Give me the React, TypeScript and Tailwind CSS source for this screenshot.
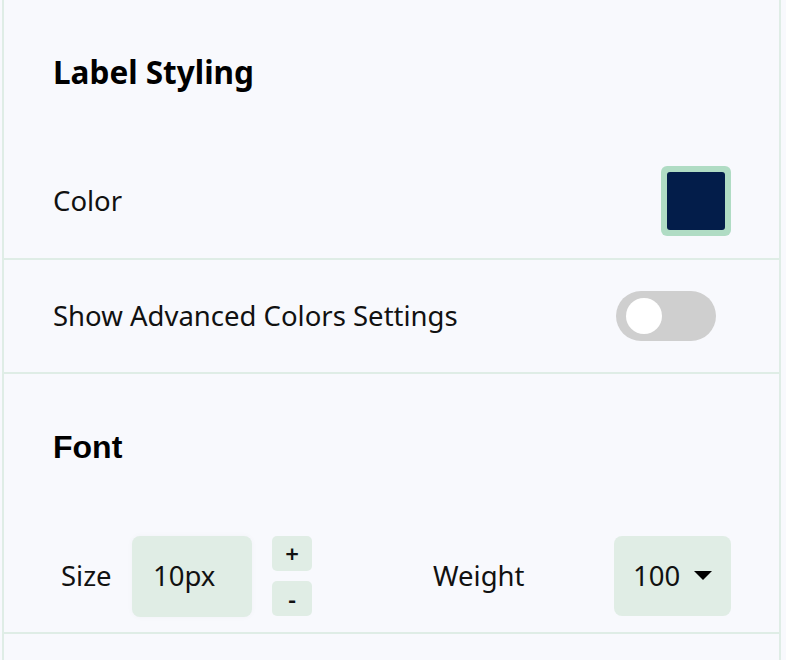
import React from "react";

export default function App() {
  return (
    <div className="w-[786px] h-[660px] bg-[#f8f9fd] overflow-hidden flex" style={{ fontFamily: '"Noto Sans", sans-serif' }}>
      <div className="w-[2px] shrink-0 bg-[#f8f9fd]" />
      <div className="w-[779px] shrink-0 border-l-2 border-r-2 border-[#dfede6] text-[#111] flex flex-col">
        <div className="h-[144px] shrink-0 pl-[49px] flex items-center">
          <h2 className="text-[31.5px] font-bold text-black">Label Styling</h2>
        </div>
        <div className="h-[114px] shrink-0 pl-[49px] pr-[48px] flex items-center justify-between">
          <span className="text-[27.5px]">Color</span>
          <div className="w-[70px] h-[70px] rounded-[6px] bg-[#b0dcc4] p-[6px]">
            <div className="w-full h-full rounded-[3px] bg-[#031d4a]" />
          </div>
        </div>
        <div className="h-[2px] shrink-0 bg-[#dfede6]" />
        <div className="h-[112px] shrink-0 pl-[49px] pr-[63px] flex items-center justify-between">
          <span className="text-[27.5px]">Show Advanced Colors Settings</span>
          <div className="w-[100px] h-[50px] rounded-full bg-[#cfcfcf] flex items-center pl-[10px]">
            <div className="w-[36px] h-[36px] rounded-full bg-white" />
          </div>
        </div>
        <div className="h-[2px] shrink-0 bg-[#dfede6]" />
        <div className="h-[146px] shrink-0 pl-[49px] flex items-center">
          <h2 className="text-[32px] font-bold text-black" style={{ fontFamily: '"Liberation Sans", sans-serif' }}>Font</h2>
        </div>
        <div className="h-[112px] shrink-0 flex items-center pl-[57px] pr-[48px]">
          <span className="text-[27.5px] w-[71px]">Size</span>
          <div className="w-[120px] h-[81px] rounded-[8px] bg-[#e0ede5] flex items-center pl-[21px] text-[27.5px] shadow-[0_0_6px_rgba(0,0,0,0.03)]">10px</div>
          <div className="ml-[20px] flex flex-col gap-[10px]">
            <div className="w-[40px] h-[35px] rounded-[5px] bg-[#e0ede5] flex items-center justify-center text-[24px] font-semibold">+</div>
            <div className="w-[40px] h-[35px] rounded-[5px] bg-[#e0ede5] flex items-center justify-center text-[24px] font-semibold">-</div>
          </div>
          <span className="ml-[121px] text-[27.5px]">Weight</span>
          <div className="ml-auto w-[117px] h-[80px] rounded-[8px] bg-[#e0ede5] flex items-center pl-[19px] gap-[14px] text-[27.5px]">
            <span>100</span>
            <svg width="18" height="10" viewBox="0 0 18 10"><path d="M0 0 L18 0 L9 9 Z" fill="#000" /></svg>
          </div>
        </div>
        <div className="h-[2px] shrink-0 bg-[#dfede6]" />
      </div>
    </div>
  );
}
